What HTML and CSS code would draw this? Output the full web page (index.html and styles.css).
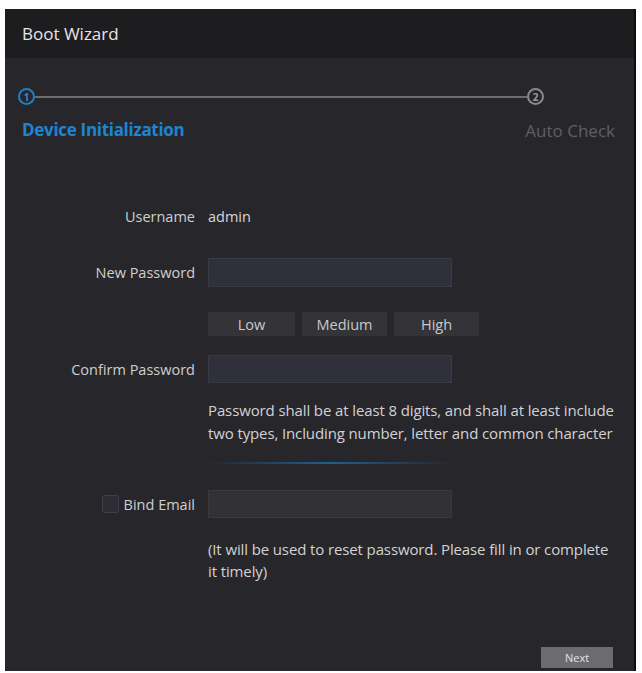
FILE: index.html
```html
<!DOCTYPE html>
<html>
<head>
<meta charset="utf-8">
<link rel="stylesheet" href="styles.css">
</head>
<body>
<div class="panel">
  <div class="header">Boot Wizard</div>
  <div class="stepper">
    <div class="step-track">
      <span class="dot dot-active">1</span>
      <span class="track-line"></span>
      <span class="dot dot-idle">2</span>
    </div>
    <div class="step-labels">
      <span class="step-label active">Device Initialization</span>
      <span class="step-label idle">Auto Check</span>
    </div>
  </div>
  <div class="form">
    <div class="row row-user">
      <div class="label">Username</div>
      <div class="value">admin</div>
    </div>
    <div class="row row-newpw">
      <div class="label">New Password</div>
      <div class="field"></div>
    </div>
    <div class="row row-strength">
      <div class="label"></div>
      <div class="strength">
        <span class="sbtn sbtn-low">Low</span>
        <span class="sbtn sbtn-med">Medium</span>
        <span class="sbtn sbtn-high">High</span>
      </div>
    </div>
    <div class="row row-confirm">
      <div class="label">Confirm Password</div>
      <div class="field"></div>
    </div>
    <div class="row row-hint">
      <div class="label"></div>
      <div class="hint">Password shall be at least 8 digits, and shall at least include two types, Including number, letter and common character</div>
    </div>
    <div class="row row-sep">
      <div class="label"></div>
      <div class="sep"></div>
    </div>
    <div class="row row-email">
      <div class="label label-check"><span class="checkbox"></span>Bind Email</div>
      <div class="field field-email"></div>
    </div>
    <div class="row row-help">
      <div class="label"></div>
      <div class="hint">(It will be used to reset password. Please fill in or complete it timely)</div>
    </div>
  </div>
  <div class="footer">
    <span class="next">Next</span>
  </div>
</div>
</body>
</html>
```
FILE: styles.css
```css
* { box-sizing: border-box; }
html, body { margin: 0; padding: 0; background: #ffffff; }
body {
  width: 642px;
  height: 673px;
  padding: 9px 6px 2px 5px;
  font-family: "Open Sans", "Noto Sans", sans-serif;
  overflow: hidden;
}
.panel {
  width: 631px;
  height: 662px;
  background: #27272b;
  border-right: 2px solid #0c0c0e;
  display: flex;
  flex-direction: column;
}
.header {
  height: 49px;
  background: #1d1d20;
  color: #e6e6e6;
  font-size: 17px;
  padding-left: 17px;
  display: flex;
  align-items: center;
}
.stepper { padding-top: 30px; }
.step-track {
  display: flex;
  align-items: center;
  padding-left: 13px;
  padding-right: 90px;
}
.dot {
  width: 17px;
  height: 17px;
  border-radius: 50%;
  border: 2px solid;
  font-size: 10px;
  font-weight: 700;
  display: flex;
  align-items: center;
  justify-content: center;
  line-height: 1;
}
.dot-active { border-color: #1f7fc6; color: #2a8ad2; }
.dot-idle { border-color: #8a8a8e; color: #9a9a9e; }
.track-line {
  flex: 1;
  height: 2px;
  background: #6d6d70;
}
.step-labels {
  display: flex;
  justify-content: space-between;
  align-items: center;
  padding: 12px 19px 0 17px;
}
.step-label { font-size: 17px; line-height: 22px; }
.step-label.active { color: #1f85d0; font-weight: 700; letter-spacing: -0.3px; }
.step-label.idle { color: #5f5f63; margin-top: 3px; }
.form {
  padding-top: 63px;
  display: flex;
  flex-direction: column;
}
.row {
  display: grid;
  grid-template-columns: 190px 1fr;
  column-gap: 13px;
  align-items: center;
}
.label {
  text-align: right;
  color: #cfcfd1;
  font-size: 14.5px;
}
.value { color: #d6d6d8; font-size: 14.5px; }
.row-user { height: 22px; }
.row-newpw { margin-top: 31px; }
.field {
  width: 244px;
  height: 29px;
  background: #2f3039;
  border: 1px solid #393a44;
}
.row-strength { margin-top: 25px; }
.strength { display: flex; gap: 7px; }
.sbtn {
  height: 24px;
  background: #343438;
  color: #c9c9cb;
  font-size: 14.5px;
  display: flex;
  align-items: center;
  justify-content: center;
}
.sbtn-low { width: 87px; }
.sbtn-med { width: 85px; }
.sbtn-high { width: 85px; }
.row-confirm { margin-top: 19px; }
.row-confirm .field { height: 28px; }
.row-hint { margin-top: 16px; align-items: start; }
.hint {
  color: #d2d2d4;
  font-size: 15px;
  line-height: 23px;
  width: 410px;
  letter-spacing: -0.12px;
}
.row-sep { margin-top: 17px; }
.sep {
  width: 244px;
  height: 2px;
  background: linear-gradient(to right, rgba(30,100,160,0) 0%, #1e5f94 50%, rgba(30,100,160,0) 100%);
}
.row-email { margin-top: 26px; }
.label-check {
  display: flex;
  align-items: center;
  justify-content: flex-end;
  gap: 5px;
}
.checkbox {
  width: 17px;
  height: 18px;
  border-radius: 3px;
  background: #2c2d35;
  border: 1px solid #3e3f4a;
}
.field-email { background: #323236; border-color: #3a3a3e; height: 28px; }
.row-help { margin-top: 20px; align-items: start; }
.row-help .hint { line-height: 22px; }
.footer {
  margin-top: auto;
  display: flex;
  justify-content: flex-end;
  padding: 0 21px 3px 0;
}
.next {
  width: 72px;
  height: 21px;
  background: #6c6c70;
  color: #e2e2e4;
  font-size: 11px;
  display: flex;
  align-items: center;
  justify-content: center;
}
```
